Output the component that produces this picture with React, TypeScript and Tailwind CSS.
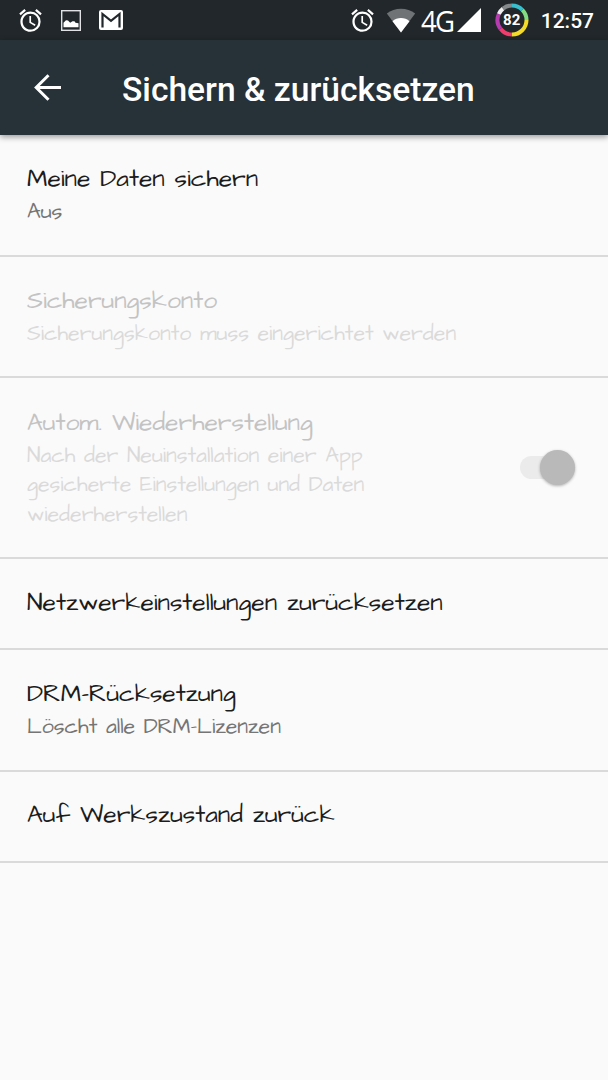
type Row = { title: string; lines?: string[]; disabled?: boolean; toggle?: boolean; box: string };

const rows: Row[] = [
  { title: 'Meine Daten sichern', lines: ['Aus'], box: 'h-[122px] pt-[26px]' },
  { title: 'Sicherungskonto', lines: ['Sicherungskonto muss eingerichtet werden'], disabled: true, box: 'h-[121px] pt-[26px]' },
  {
    title: 'Autom. Wiederherstellung',
    lines: ['Nach der Neuinstallation einer App', 'gesicherte Einstellungen und Daten', 'wiederherstellen'],
    disabled: true,
    toggle: true,
    box: 'h-[181px] pt-[27px]',
  },
  { title: 'Netzwerkeinstellungen zurücksetzen', box: 'h-[91px] pt-[26px]' },
  { title: 'DRM-Rücksetzung', lines: ['Löscht alle DRM-Lizenzen'], box: 'h-[122px] pt-[26px]' },
  { title: 'Auf Werkszustand zurück', box: 'h-[91px] pt-[25px]' },
];

function Alarm() {
  return (
    <svg viewBox="0 0 24 24" className="size-[27px] shrink-0" fill="white">
      <path d="M22 5.72l-4.6-3.86-1.29 1.53 4.6 3.86L22 5.72zM7.88 3.39L6.6 1.86 2 5.71l1.29 1.53 4.59-3.85zM12.5 8H11v6l4.75 2.85.75-1.23-4-2.37V8zM12 4c-4.97 0-9 4.03-9 9s4.02 9 9 9a9 9 0 0 0 0-18zm0 16c-3.87 0-7-3.13-7-7s3.13-7 7-7 7 3.13 7 7-3.13 7-7 7z" />
    </svg>
  );
}

function StatusBar() {
  return (
    <div className="flex h-10 items-center bg-[#21272a] text-white">
      <div className="flex flex-1 items-center pl-[17px]">
        <Alarm />
        <svg viewBox="0 0 20 21" className="ml-[17px] h-[21px] w-5" fill="none">
          <rect x="0.7" y="0.7" width="18.6" height="19.6" stroke="#dfe1e2" strokeWidth="1.4" />
          <path d="M2.5 17.2v-4.500l2.500-2.500 2 .2 2.200 2.300 2.300-1.500h2l1 1.500 3 .5v4z" fill="white" />
        </svg>
        <svg viewBox="0 0 24 20" className="ml-[18px] h-5 w-6">
          <rect width="24" height="20" rx="2" fill="white" />
          <path d="M3.500 17.500V4L12 10.800 20.500 4V17.500" fill="none" stroke="#21272a" strokeWidth="2.200" />
        </svg>
      </div>
      <div className="flex items-center">
        <Alarm />
        <svg viewBox="0 0 30 25" className="ml-[10px] h-[25px] w-[30px]">
          <path d="M15 24.500L.8 5.500C8.500-.8 21.500-.8 29.200 5.500z" fill="#6f7375" />
          <path d="M15 24.500L6.500 13.200c4.500-4.200 12.500-4.200 17 0z" fill="white" />
        </svg>
        <span className="ml-[5px] w-[34px] origin-left scale-x-[0.92] pt-[2px] font-['Open_Sans',sans-serif] text-[30px] leading-[38px] tracking-[-2px]">4G</span>
        <svg viewBox="0 0 24 24" className="ml-[2px] size-6">
          <path d="M24 0v24H0z" fill="white" />
        </svg>
        <div className="relative ml-[14px] size-[34px]">
          <svg viewBox="0 0 34 34" className="size-[34px]" fill="none" strokeWidth="4">
            <path d="M17 2.500A14.500 14.500 0 0 1 27.300 6.800" stroke="#37bfd0" />
            <path d="M27.300 6.800A14.500 14.500 0 0 1 31.500 17" stroke="#83dc83" />
            <path d="M31.500 17A14.500 14.500 0 0 1 17 31.500" stroke="#f3db27" />
            <path d="M17 31.500A14.500 14.500 0 0 1 5.500 25.800" stroke="#ee3e6d" />
            <path d="M5.500 25.800A14.500 14.500 0 0 1 3.800 11" stroke="#b43caf" />
            <path d="M3.800 11A14.500 14.500 0 0 1 8 5.600" stroke="#eeeeee" />
            <path d="M8 5.600A14.500 14.500 0 0 1 17 2.500" stroke="#85898b" />
          </svg>
          <span className="absolute inset-0 flex items-center justify-center font-['Roboto',sans-serif] text-[15px] font-bold">82</span>
        </div>
        <span className="mr-[14px] ml-[12px] pt-[4px] font-['Roboto',sans-serif] text-[21px] font-medium">12:57</span>
      </div>
    </div>
  );
}

export default function App() {
  return (
    <div className="flex h-[1080px] w-[608px] flex-col overflow-hidden bg-[#fafafa]">
      <StatusBar />
      <header className="z-10 flex h-[95px] items-center bg-[#263238] pl-[34px] text-white shadow-[0_2px_6px_rgba(0,0,0,0.4)]">
        <svg viewBox="0 0 27 27" className="size-[27px]" fill="none" stroke="white" strokeWidth="3">
          <path d="M27 13.500H2.500M14.500 1.200L2.200 13.500L14.500 25.800" />
        </svg>
        <h1 className="ml-[61px] pt-[5px] font-['Roboto',sans-serif] text-[33.600px] leading-10 font-medium whitespace-nowrap">Sichern &amp; zurücksetzen</h1>
      </header>
      <main className="flex flex-col font-['Architects_Daughter','Lato',sans-serif]">
        {rows.map((r) => (
          <section key={r.title} className={`flex justify-between border-b-2 border-[#dadada] pr-[33px] pl-[27px] ${r.box}`}>
            <div className="whitespace-nowrap">
              <h2 className={`mb-[0.500px] text-[24.750px] leading-[36px] ${r.disabled ? 'text-[#c3c3c3]' : 'text-[#1c1c1c]'}`}>{r.title}</h2>
              {r.lines?.map((l) => (
                <p key={l} className={`text-[21.400px] leading-[29.600px] ${r.disabled ? 'text-[#dadada]' : 'text-[#757575]'}`}>{l}</p>
              ))}
            </div>
            {r.toggle && (
              <div className="mt-[45px] flex h-[35px] w-[55px] items-center">
                <div className="flex h-[23px] w-full items-center justify-end rounded-full bg-[#ebebeb]">
                  <div className="size-[35px] shrink-0 rounded-full bg-[#b9b9b9] shadow-[0_1px_3px_rgba(0,0,0,0.3)]" />
                </div>
              </div>
            )}
          </section>
        ))}
      </main>
    </div>
  );
}
